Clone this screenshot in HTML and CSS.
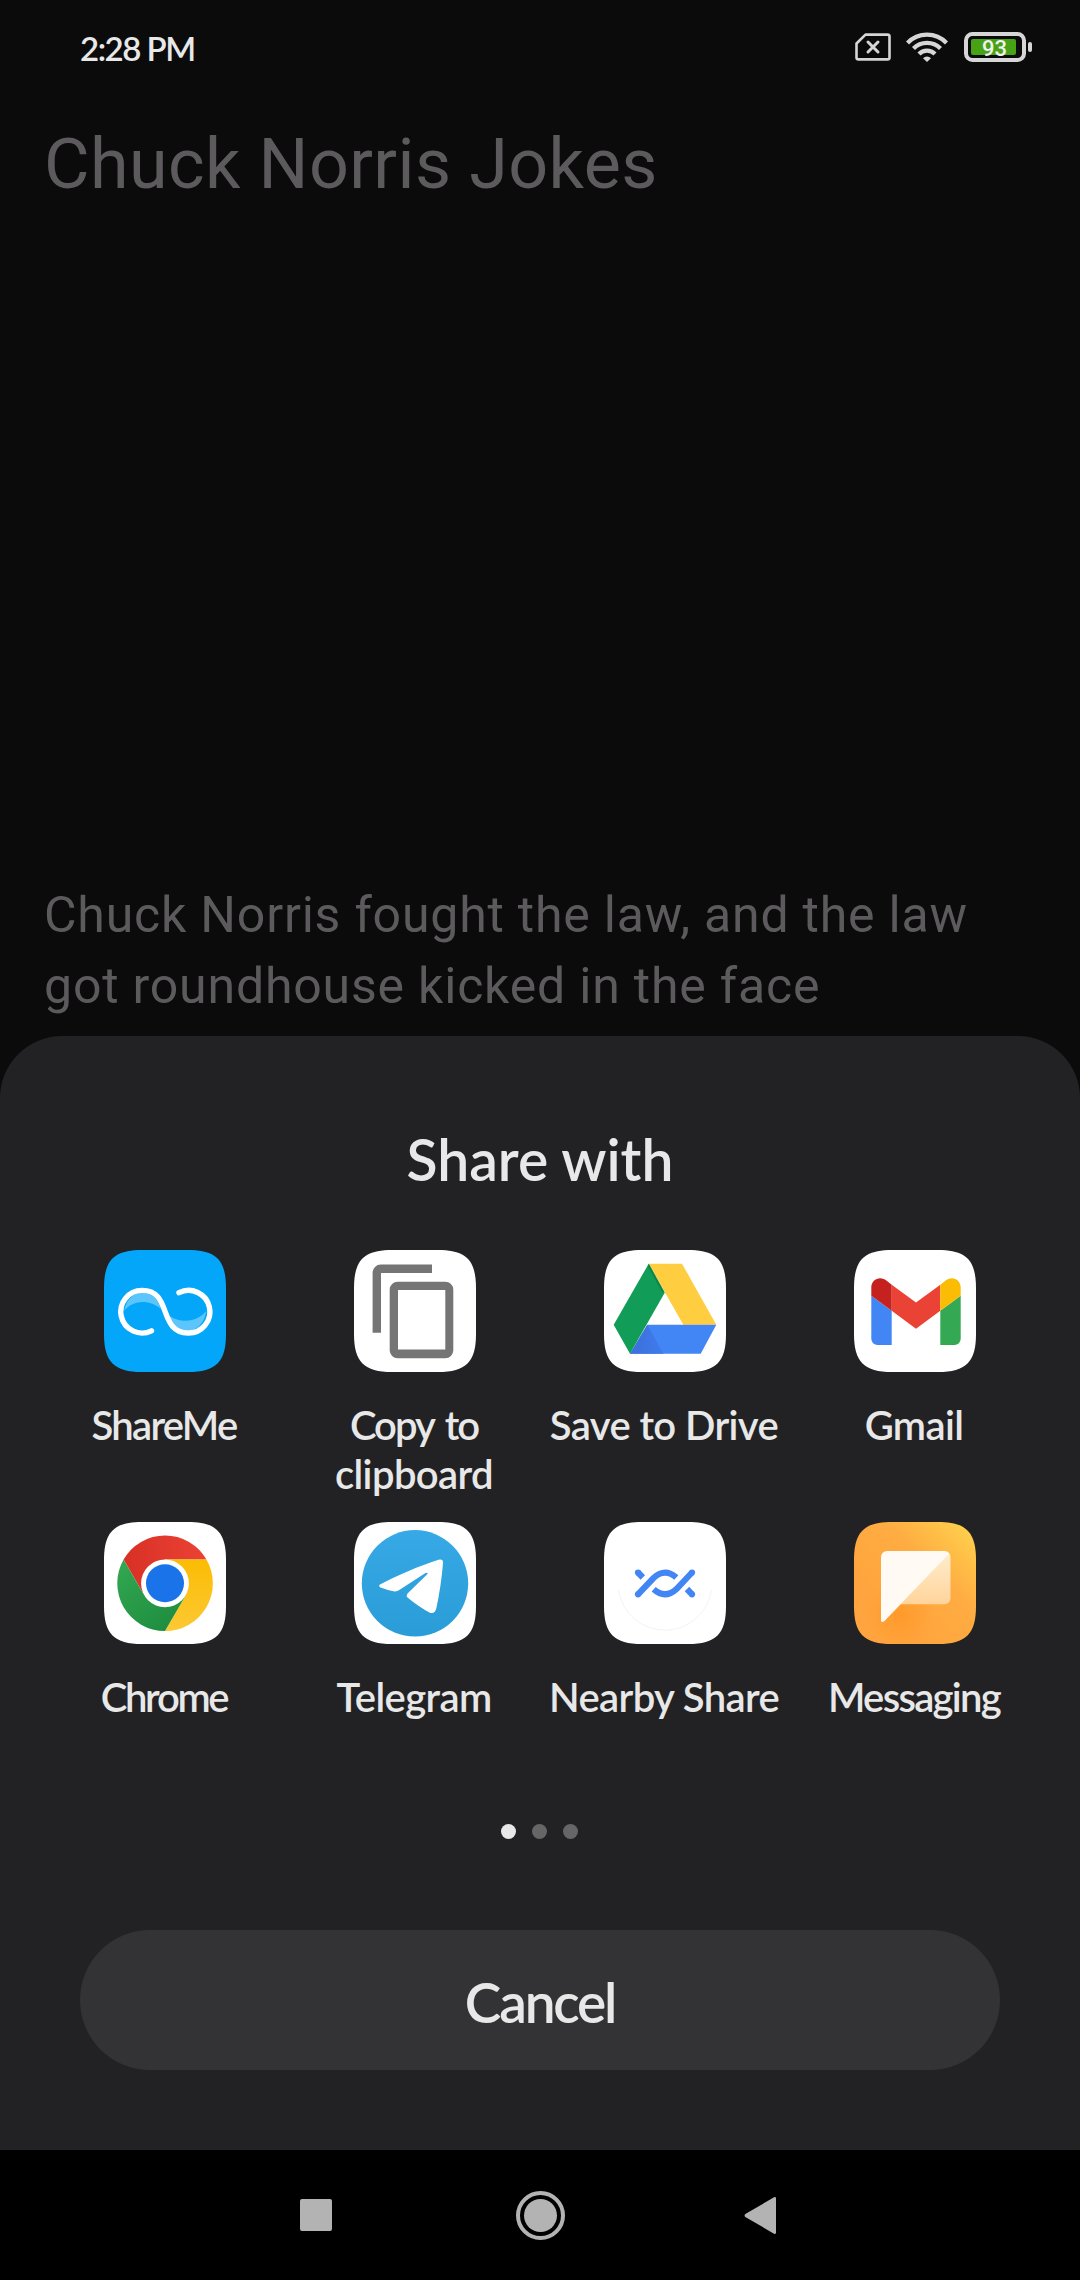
FILE: index.html
```html
<!DOCTYPE html>
<html lang="en">
<head>
<meta charset="utf-8">
<title>Chuck Norris Jokes</title>
<link rel="stylesheet" href="styles.css">
</head>
<body>
<div class="screen">
  <header class="status">
    <span class="clock">2:28 PM</span>
    <svg class="sim" width="36" height="30" viewBox="0 0 36 30"><path d="M10.5 2.6H32.5a2 2 0 0 1 2 2V25.400a2 2 0 0 1-2 2H3.500a2 2 0 0 1-2-2V11.500z" fill="none" stroke="#d6d6d6" stroke-width="2.600" stroke-linejoin="round"/><path d="M13 10l10 10M23 10L13 20" stroke="#d6d6d6" stroke-width="3" stroke-linecap="round"/></svg>
    <svg class="wifi" width="42" height="30" viewBox="0 0 42 30"><g fill="none" stroke="#d6d6d6" stroke-width="4.200"><path d="M1.500 11a27 27 0 0 1 39 0"/><path d="M7.500 16.500a18.800 18.800 0 0 1 27 0"/><path d="M13 22a11 11 0 0 1 16 0"/></g><path d="M17 26.200a5.500 5.500 0 0 1 8 0L21 30z" fill="#d6d6d6"/></svg>
    <svg class="battery" width="68" height="30" viewBox="0 0 68 30"><rect x="2" y="2" width="58" height="26" rx="6.500" fill="none" stroke="#d6d6d6" stroke-width="4"/><rect x="7" y="7" width="45" height="16" rx="2" fill="#48a216"/><rect x="64" y="10" width="4" height="10" rx="2" fill="#d6d6d6"/><text x="30.500" y="23.500" text-anchor="middle" class="level">93</text></svg>
  </header>
  <h1 class="title">Chuck Norris Jokes</h1>
  <main class="joke">Chuck Norris fought the law, and the law<br>got roundhouse kicked in the face</main>
  <section class="sheet">
    <h2 class="heading">Share with</h2>
    <div class="apps">
      <div class="app">
        <svg class="icon" viewBox="0 0 122 122"><path fill="#03a6f9" d="M0 38C0 10 10 0 38 0H84C112 0 122 10 122 38V84C122 112 112 122 84 122H38C10 122 0 112 0 84Z"/><path d="M20 61C23 48 30 43 38.300 43C49 43 53 49 57 59C46 50 30 49 20 61ZM102.500 61C99.500 75 92 80.500 84 80.500C74 80.500 69 75 65.500 66C76 73 92 73 102.500 61Z" fill="#5cc5fb"/><path d="M47.500 80.800A21.300 21.300 0 1 1 38.300 40.400C54 40.400 57.500 52 61.200 61.700C65 72 69 83 84 83A21.300 21.300 0 1 0 75 42.700" fill="none" stroke="#fff" stroke-width="5.400" stroke-linecap="round"/></svg>
        <span class="label tight">ShareMe</span>
      </div>
      <div class="app">
        <svg class="icon" viewBox="0 0 122 122"><path fill="#fff" d="M0 38C0 10 10 0 38 0H84C112 0 122 10 122 38V84C122 112 112 122 84 122H38C10 122 0 112 0 84Z"/><path d="M22.800 82.700V22.800a4 4 0 0 1 4-4H78" fill="none" stroke="#757575" stroke-width="8.400"/><rect x="35.700" y="31.700" width="63.600" height="76.600" rx="8" fill="#757575"/><rect x="44" y="40" width="47.300" height="59.500" fill="#fff"/></svg>
        <span class="label copy">Copy to</span><span class="label">clipboard</span>
      </div>
      <div class="app">
        <svg class="icon" viewBox="0 0 122 122"><defs><linearGradient id="driveShade" x1="0" y1="0" x2="1" y2="0"><stop offset="0" stop-color="#3c6fdb"/><stop offset="1" stop-color="#3f7ced"/></linearGradient></defs><path fill="#fff" d="M0 38C0 10 10 0 38 0H84C112 0 122 10 122 38V84C122 112 112 122 84 122H38C10 122 0 112 0 84Z"/><path d="M44.700 13.700H78L112.300 74.700H79.300Z" fill="#ffcd40"/><path d="M43.300 74.700H112.300L96.700 103.700H26Z" fill="#4285f4"/><path d="M43.300 74.700L59.500 103.700H26Z" fill="url(#driveShade)"/><path d="M44.700 13.700L60.700 42.700L26 103.700L9.700 74.700Z" fill="#119d58"/><path d="M44.700 13.700L60.700 42.700L57.500 41L44 17Z" fill="#0b864b"/></svg>
        <span class="label">Save to Drive</span>
      </div>
      <div class="app">
        <svg class="icon" viewBox="0 0 122 122"><path fill="#fff" d="M0 38C0 10 10 0 38 0H84C112 0 122 10 122 38V84C122 112 112 122 84 122H38C10 122 0 112 0 84Z"/><path d="M17.300 45.700L37.700 60.700V95H23.500a6.200 6.200 0 0 1-6.200-6.200Z" fill="#4285f4"/><path d="M106.700 45.700L86.300 60.700V95H100.500a6.200 6.200 0 0 0 6.200-6.200Z" fill="#34a853"/><path d="M37.700 34.700L62 52.500L86.300 34.700V60.700L62 78.700L37.700 60.700Z" fill="#ea4335"/><path d="M37.700 34.700V60.700L17.300 45.700V37.500C17.300 29 26.500 25 33 31Z" fill="#c5221f"/><path d="M86.300 34.700V60.700L106.700 45.700V37.500C106.700 29 97.500 25 91 31Z" fill="#fbbc04"/></svg>
        <span class="label">Gmail</span>
      </div>
      <div class="app">
        <svg class="icon" viewBox="0 0 122 122"><defs><linearGradient id="cr" x1="0" x2="1"><stop offset="0" stop-color="#d93025"/><stop offset="1" stop-color="#ea4335"/></linearGradient><linearGradient id="cg" x1="0" y1="0" x2=".7" y2="1"><stop offset="0" stop-color="#34a853"/><stop offset="1" stop-color="#1e8e3e"/></linearGradient><linearGradient id="cy" x1="0" y1="0" x2="0" y2="1"><stop offset="0" stop-color="#fbbc04"/><stop offset="1" stop-color="#fcc934"/></linearGradient></defs><path fill="#fff" d="M0 38C0 10 10 0 38 0H84C112 0 122 10 122 38V84C122 112 112 122 84 122H38C10 122 0 112 0 84Z"/><path d="M19.600 37.500A47.800 47.800 0 0 1 102.500 37.500H61L40.200 73.300Z" fill="url(#cr)"/><path d="M61 37.500H102.500A47.800 47.800 0 0 1 61 109.100L81.800 73.300Z" fill="url(#cy)"/><path d="M61 109.100A47.800 47.800 0 0 1 19.600 37.500L40.200 73.300L61 61L81.800 73.300Z" fill="url(#cg)"/><circle cx="61" cy="61.300" r="23.900" fill="#fff"/><circle cx="61" cy="61.300" r="19" fill="#1a73e8"/></svg>
        <span class="label tighter">Chrome</span>
      </div>
      <div class="app">
        <svg class="icon" viewBox="0 0 122 122"><defs><linearGradient id="tg" x1="0" y1="0" x2="0" y2="1"><stop offset="0" stop-color="#36a9e6"/><stop offset="1" stop-color="#2a9dd8"/></linearGradient></defs><path fill="#fff" d="M0 38C0 10 10 0 38 0H84C112 0 122 10 122 38V84C122 112 112 122 84 122H38C10 122 0 112 0 84Z"/><circle cx="61" cy="61.300" r="53.200" fill="url(#tg)"/><path d="M26 62.500C44 53 65 44 84.500 37.700Q89.300 36.700 89 41Q87 65 82.300 86.500Q80.500 92.500 75.500 90.500Q65 85 53.500 75.500Q52 73.500 53.500 71.500L73 52.500Q75 50 71.500 51L46 67.500Q43 69.800 39.500 69.300Q33 68 26.500 65.500Q24 64 26 62.500Z" fill="#fff"/></svg>
        <span class="label">Telegram</span>
      </div>
      <div class="app">
        <svg class="icon" viewBox="0 0 122 122"><path fill="#fff" d="M0 38C0 10 10 0 38 0H84C112 0 122 10 122 38V84C122 112 112 122 84 122H38C10 122 0 112 0 84Z"/><path d="M14.500 68A47 47 0 0 0 107.500 68" fill="none" stroke="#ececec" stroke-width=".7"/><g fill="none" stroke="#4285f4" stroke-width="6.200"><path d="M34 50.500L38.800 55.500M83 67L88 72.300M34 72.300L49.500 56Q61 45.500 72.300 55.500M49.700 67.300Q61 77.500 72.500 67L88 50.500"/></g><g fill="#4285f4"><circle cx="34" cy="50.500" r="3.100"/><circle cx="88" cy="50.500" r="3.100"/><circle cx="34" cy="72.300" r="3.100"/><circle cx="88" cy="72.300" r="3.100"/></g></svg>
        <span class="label">Nearby Share</span>
      </div>
      <div class="app">
        <svg class="icon" viewBox="0 0 122 122"><defs><linearGradient id="mg" x1=".25" y1=".75" x2="1" y2="0"><stop offset="0" stop-color="#ffa43e"/><stop offset=".5" stop-color="#ffac42"/><stop offset="1" stop-color="#ffd54e"/></linearGradient><radialGradient id="ms" cx=".38" cy=".76" r=".28"><stop offset="0" stop-color="#ff9a2b"/><stop offset="1" stop-color="#ff9a2b" stop-opacity="0"/></radialGradient><linearGradient id="mb" x1="0" y1="0" x2="0" y2="1"><stop offset="0" stop-color="#ffedcc"/><stop offset="1" stop-color="#ffd49b"/></linearGradient></defs><path fill="url(#mg)" d="M0 38C0 10 10 0 38 0H84C112 0 122 10 122 38V84C122 112 112 122 84 122H38C10 122 0 112 0 84Z"/><path fill="url(#ms)" d="M0 38C0 10 10 0 38 0H84C112 0 122 10 122 38V84C122 112 112 122 84 122H38C10 122 0 112 0 84Z"/><path d="M95 31L46 82.300H90.500a6 6 0 0 0 6-6V35Q96.500 32.500 95 31Z" fill="url(#mb)"/><path d="M33 29H91Q94 29 95.300 31.500L30.500 99Q27 101.500 27 98V35a6 6 0 0 1 6-6Z" fill="#fffbf4"/></svg>
        <span class="label tight">Messaging</span>
      </div>
    </div>
    <div class="dots"><i class="dot on"></i><i class="dot"></i><i class="dot"></i></div>
    <button class="cancel">Cancel</button>
  </section>
  <nav class="nav">
    <svg width="480" height="50" viewBox="0 0 480 50" fill="#b3b3b3"><rect x="0" y="9" width="32" height="32" rx="2"/><circle cx="240.500" cy="25.500" r="16.500"/><circle cx="240.500" cy="25.500" r="22.500" fill="none" stroke="#b3b3b3" stroke-width="4"/><path d="M445.300 24.100L474 7.300Q476 6.500 476 8.500V42.500Q476 44.500 474 43.700L445.300 26.900Q443.800 25.500 445.300 24.100Z"/></svg>
  </nav>
</div>
</body>
</html>
```
FILE: styles.css
```css
* { box-sizing: border-box; }
body { margin: 0; background: #0b0b0b; }
.screen { width: 1080px; height: 2280px; display: flex; flex-direction: column; overflow: hidden; font-family: Lato, "Open Sans", sans-serif; color: #e8e8e8; }
.status { height: 94px; flex: none; padding: 0 48px 0 80px; display: flex; align-items: center; }
.clock { padding-top: 2px; font-size: 33px; line-height: 40px; font-weight: 600; letter-spacing: -1.5px; margin-right: auto; }
.sim { margin-right: 15px; }
.wifi { margin-right: 16px; }
.level { font: 500 22px Roboto, sans-serif; fill: #f2f2f2; }
.title { margin: 29px 0 0 44px; font: 400 70px/82px Roboto, sans-serif; letter-spacing: 0.4px; color: #5c5a5c; }
.joke { margin: 675px 0 0 44px; font: 400 50px/71px Roboto, sans-serif; letter-spacing: 0.8px; color: #5c5a5c; white-space: nowrap; }
.sheet { margin-top: auto; flex: none; height: 1114px; background: #222224; border-radius: 62px 62px 0 0; display: flex; flex-direction: column; align-items: center; }
.heading { margin: 88px 0 0; font-size: 57px; line-height: 70px; font-weight: 600; }
.apps { margin-top: 56px; width: 1000px; display: grid; grid-template-columns: repeat(4, 250px); grid-auto-rows: 272px; }
.app { display: flex; flex-direction: column; align-items: center; }
.icon { width: 122px; height: 122px; margin-bottom: 29px; flex: none; }
.label { margin-right: 2px; font-size: 40px; line-height: 49px; font-weight: 600; letter-spacing: -0.6px; white-space: nowrap; }
.copy { letter-spacing: -2px; word-spacing: 4px; }
.tight { letter-spacing: -1.7px; }
.tighter { letter-spacing: -2.3px; }
.dots { margin-top: 30px; margin-right: 2px; display: flex; gap: 16px; }
.dot { width: 15px; height: 15px; border-radius: 50%; background: #666; }
.on { background: #e8e8e8; }
.cancel { margin-top: auto; margin-bottom: 80px; width: 920px; height: 140px; padding: 4px 0 0; border: 0; border-radius: 70px; background: #333335; color: inherit; font: 600 55px/68px Lato, sans-serif; letter-spacing: -2.2px; }
.nav { height: 130px; flex: none; background: #000; padding-left: 300px; display: flex; align-items: center; }
```
